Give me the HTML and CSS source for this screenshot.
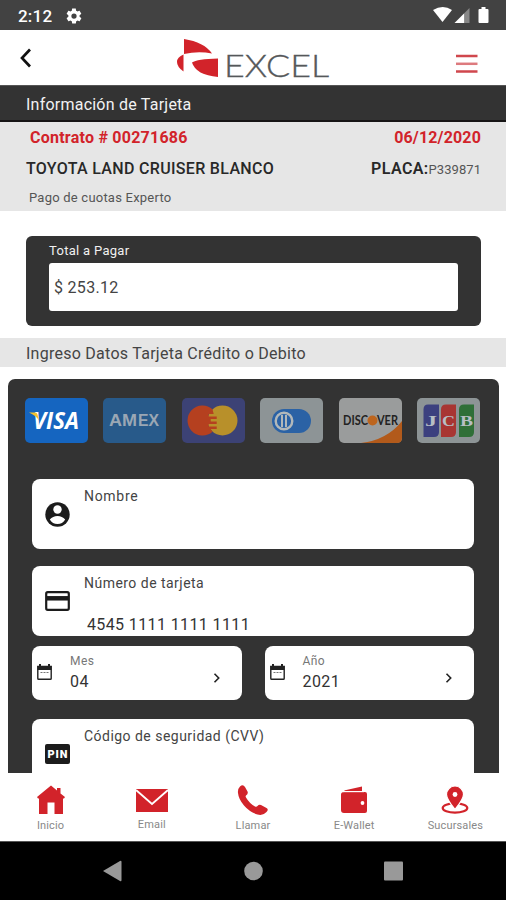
FILE: index.html
```html
<!DOCTYPE html>
<html lang="es">
<head>
<meta charset="utf-8">
<title>Información de Tarjeta</title>
<link rel="stylesheet" href="styles.css">
</head>
<body>
<div class="app">
  <div class="status">
    <span class="clock">2:12</span>
    <svg class="gear" width="18" height="18" viewBox="0 0 24 24"><path fill="#fff" fill-rule="evenodd" d="M19.4 13a7.500 7.500 0 0 0 0-2l2.100-1.600c.2-.2.2-.4.100-.6l-2-3.500c-.1-.2-.4-.3-.6-.2l-2.500 1a7.300 7.300 0 0 0-1.700-1L14.400 2.400c0-.2-.2-.4-.5-.4h-4c-.2 0-.4.2-.5.4L9.100 5.100c-.6.2-1.200.6-1.700 1l-2.500-1c-.2-.1-.5 0-.6.2l-2 3.500c-.1.200-.1.500.1.600L4.500 11a7.900 7.900 0 0 0 0 2l-2.100 1.600c-.2.200-.2.400-.1.600l2 3.500c.1.200.4.300.6.200l2.500-1c.5.400 1.100.7 1.700 1l.4 2.700c0 .200.2.400.5.400h4c.2 0 .4-.2.500-.4l.4-2.700c.6-.2 1.200-.6 1.700-1l2.500 1c.2.100.5 0 .6-.2l2-3.500c.1-.2.1-.5-.1-.6zM12 15.500a3.500 3.500 0 1 1 0-7 3.500 3.500 0 0 1 0 7z"/></svg>
    <svg class="signals" width="60" height="20" viewBox="0 0 60 20"><path fill="#fff" d="M-1 5Q9-1 18 5L8.500 17z"/><path fill="#fff" d="M20.500 18L30.500 8v10z"/><path fill="#888" d="M30.500 8l5-5v15h-5z"/><path fill="#fff" d="M47.500 2h4v2h2q1 0 1 1v12q0 1-1 1h-8q-1 0-1-1V5q0-1 1-1h2z"/></svg>
  </div>

  <header class="header">
    <svg class="back" width="14" height="20" viewBox="0 0 14 20"><path d="M11 1.500L3 10l8 8.500" fill="none" stroke="#111" stroke-width="2.700"/></svg>
    <svg class="brand" width="170" height="48" viewBox="0 0 170 48">
      <g fill="#d2232a"><path d="M8 2Q28 5 36 16.500Q22 14 8 17z"/><path d="M7.500 17.500v17Q1 30 1 25t6.500-7.500z"/><path d="M16 25.500q5-3.500 26-4v18.500Q20 38 16 25.500z"/></g>
      <text class="brand-name" x="48" y="40" textLength="105" lengthAdjust="spacingAndGlyphs">EXCEL</text>
    </svg>
    <svg class="menu" width="22" height="20" viewBox="0 0 22 20"><path d="M0 2h21.500M0 17.500h21.500" stroke="#d0474d" stroke-width="2.300"/><path d="M0 9.800h21.500" stroke="#dd7a7e" stroke-width="2.500"/></svg>
  </header>

  <h1 class="title">Información de Tarjeta</h1>

  <section class="contract">
    <div class="row red"><span class="number">Contrato # 00271686</span><span class="date">06/12/2020</span></div>
    <div class="row vehicle"><span class="model">TOYOTA LAND CRUISER BLANCO</span><span><b class="plate-label">PLACA:</b><span class="plate">P339871</span></span></div>
    <div class="concept">Pago de cuotas Experto</div>
  </section>

  <section class="total">
    <div class="total-label">Total a Pagar</div>
    <div class="amount">$ 253.12</div>
  </section>

  <h2 class="subtitle">Ingreso Datos Tarjeta Crédito o Debito</h2>

  <section class="form">
    <div class="brands">
      <svg viewBox="0 0 63 45"><rect width="63" height="45" rx="5" fill="#1565c0"/><text class="visa" x="8" y="31" textLength="46" lengthAdjust="spacingAndGlyphs">VISA</text><path d="M4 14.500h6q2 0 2.500 2l1.500 6q-3-5-10-8z" fill="#f5c12e"/></svg>
      <svg viewBox="0 0 63 45"><rect width="63" height="45" rx="5" fill="#285a8a"/><text class="amex" x="6" y="27.500" textLength="28" lengthAdjust="spacingAndGlyphs">AM</text><text class="amex" x="35" y="27.500" textLength="21" lengthAdjust="spacingAndGlyphs">EX</text></svg>
      <svg viewBox="0 0 63 45"><rect width="63" height="45" rx="5" fill="#3c4275"/><circle cx="40.500" cy="22.500" r="15" fill="#b8902a"/><path d="M30.500 11.300a15 15 0 1 0 0 22.400l-1.800-2.700h6v-2.500h-8V26h8v-2.500h-6V21h6v-2.500h-8V16h5z" fill="#b5401f"/></svg>
      <svg viewBox="0 0 63 45"><rect width="63" height="45" rx="5" fill="#8d9496"/><rect x="12" y="11" width="39" height="24" rx="12" fill="#2b62a5"/><circle cx="24" cy="23" r="8.300" fill="#2b62a5" stroke="#b2b8ba" stroke-width="2.400"/><path d="M22 17v12M26 17v12" stroke="#b2b8ba" stroke-width="2"/></svg>
      <svg viewBox="0 0 63 45"><rect width="63" height="45" rx="5" fill="#9a9c9c"/><path d="M22 45Q48 42 63 23v17q0 5-5 5z" fill="#b25a1b"/><text class="discover" x="4" y="27" textLength="25" lengthAdjust="spacingAndGlyphs">DISC</text><circle cx="33.500" cy="22.500" r="5" fill="#bd651e"/><text class="discover" x="38" y="27" textLength="21" lengthAdjust="spacingAndGlyphs">VER</text></svg>
      <svg viewBox="0 0 63 45"><rect width="63" height="45" rx="5" fill="#8d9496"/><path d="M11 6.500h11V34q0 5-5 5H6.500V11.500q0-5 4.500-5z" fill="#3c407f"/><path d="M29 6.500h10V34q0 5-5 5H24V11.500q0-5 5-5z" fill="#a83533"/><path d="M47 6.500h10V34q0 5-5 5H42V11.500q0-5 5-5z" fill="#2f6f38"/><text class="jcb" x="8" y="27.500" textLength="12" lengthAdjust="spacingAndGlyphs">J</text><text class="jcb" x="25" y="27.500" textLength="13" lengthAdjust="spacingAndGlyphs">C</text><text class="jcb" x="43" y="27.500" textLength="13" lengthAdjust="spacingAndGlyphs">B</text></svg>
    </div>

    <div class="field">
      <svg class="icon" width="25" height="25" viewBox="0 0 25 25"><circle cx="12.500" cy="12.500" r="12.200" fill="#1c1c1c"/><circle cx="12.500" cy="7.500" r="4.200" fill="#fff"/><path d="M4.800 17.500q3-3.500 7.700-3.500t7.700 3.500q-2.700 4.500-7.700 4.500t-7.700-4.500z" fill="#fff"/></svg>
      <div class="label name-label">Nombre</div>
    </div>

    <div class="field">
      <svg class="icon" width="25" height="20" viewBox="0 0 25 20"><rect x="1.200" y="1.200" width="22.600" height="17.600" rx="1.500" fill="none" stroke="#1c1c1c" stroke-width="2.200"/><path d="M1 7.300h23" stroke="#1c1c1c" stroke-width="4.500"/></svg>
      <div><div class="label">Número de tarjeta</div><div class="card-number">4545 1111 1111 1111</div></div>
    </div>

    <div class="expiry">
      <div class="select">
        <svg class="cal" width="15" height="16" viewBox="0 0 15 16"><path d="M.8 2.500h13.400v12q0 .8-.8.800H1.600q-.8 0-.8-.8z" fill="#fff" stroke="#222" stroke-width="1.400"/><path d="M.5 2h14v4H.5zM2 0h2v3H2zM11 0h2v3h-2z" fill="#222"/><path d="M3.500 8.500h8" stroke="#777" stroke-dasharray="2 1"/></svg>
        <div class="select-text"><div class="small">Mes</div><div class="value">04</div></div>
        <svg class="chevron" width="8" height="10" viewBox="0 0 8 10"><path d="M1.500.8L5.700 5 1.500 9.200" fill="none" stroke="#222" stroke-width="1.600"/></svg>
      </div>
      <div class="select">
        <svg class="cal" width="15" height="16" viewBox="0 0 15 16"><path d="M.8 2.500h13.400v12q0 .8-.8.800H1.600q-.8 0-.8-.8z" fill="#fff" stroke="#222" stroke-width="1.400"/><path d="M.5 2h14v4H.5zM2 0h2v3H2zM11 0h2v3h-2z" fill="#222"/><path d="M3.500 8.500h8" stroke="#777" stroke-dasharray="2 1"/></svg>
        <div class="select-text"><div class="small">Año</div><div class="value">2021</div></div>
        <svg class="chevron" width="8" height="10" viewBox="0 0 8 10"><path d="M1.500.8L5.700 5 1.500 9.200" fill="none" stroke="#222" stroke-width="1.600"/></svg>
      </div>
    </div>

    <div class="field">
      <svg class="icon" width="25" height="20" viewBox="0 0 25 20"><rect width="25" height="20" rx="2" fill="#1c1c1c"/><text class="pin" x="2.500" y="14" textLength="20">PIN</text></svg>
      <div class="label">Código de seguridad (CVV)</div>
    </div>
  </section>

  <nav class="tabs">
    <div class="tab"><svg width="34" height="30" viewBox="0 0 34 30"><path fill="#d2232a" d="M17 .5l6 5V3h3.500v5.500L31 12l-1 1.500h-1V29h-8.500V17.500h-7V29H5V13.500H4L3 12z"/></svg><span>Inicio</span></div>
    <div class="tab"><svg width="34" height="30" viewBox="0 0 34 30"><path fill="#d2232a" d="M1 4h32v23H1z"/><path d="M1 5l16 14L33 5" fill="none" stroke="#fff" stroke-width="1.800"/></svg><span class="raised">Email</span></div>
    <div class="tab"><svg width="34" height="30" viewBox="0 0 34 30"><path fill="#d2232a" d="M4 1.500q3-2.500 5 .5l2.500 4.500q1 2-1.500 4-.8.700 0 2 3.500 6 9 9 1.500.8 2.500-.5 1.500-2 3.500-1l5.500 3q2.500 1.500 0 4-3.500 4-9 2.500-8-2.500-13.500-9T2 8q-.5-4 2-6.500z"/></svg><span>Llamar</span></div>
    <div class="tab"><svg width="34" height="30" viewBox="0 0 34 30"><path fill="#d2232a" d="M7 5.500l18-4V6H8zM7 7h21q2 0 2 2v17q0 2-2 2H7q-3 0-3-3V9.500Q4 7 7 7z"/><path d="M6 6.700h21" stroke="#fff"/><circle cx="25.500" cy="18" r="1.900" fill="#fff"/></svg><span>E-Wallet</span></div>
    <div class="tab"><svg width="34" height="30" viewBox="0 0 34 30"><ellipse cx="17" cy="23" rx="12.300" ry="4.600" fill="none" stroke="#d2232a" stroke-width="2.200"/><path d="M17 24.500Q8.500 14 8.500 9.500a8.500 8.500 0 0 1 17 0Q25.500 14 17 24.500z" fill="#d2232a" stroke="#fff" stroke-width="1.200"/><circle cx="17" cy="9.500" r="2.400" fill="#fff"/></svg><span>Sucursales</span></div>
  </nav>

  <div class="navbar">
    <svg width="19" height="22" viewBox="0 0 19 22"><path d="M0 11L17 1q1.500-.8 1.500 1v18q0 1.800-1.500 1z" fill="#999"/></svg>
    <svg width="19" height="20" viewBox="0 0 19 20"><circle cx="9.500" cy="10" r="9.300" fill="#999"/></svg>
    <svg width="19" height="20" viewBox="0 0 19 20"><rect y=".5" width="19" height="19" rx="1" fill="#999"/></svg>
  </div>
</div>
</body>
</html>
```
FILE: styles.css
```css
* { box-sizing: border-box; }
body { margin: 0; background: #fff; font-family: Roboto, "Liberation Sans", sans-serif; color: #444; }
svg { display: block; flex: none; }
.app { width: 506px; height: 900px; overflow: hidden; display: flex; flex-direction: column; }
.app > * { flex: none; }

.status { height: 30px; background: #424242; display: flex; align-items: center; padding: 0 15px 0 18px; }
.clock { color: #fff; font-size: 17px; font-weight: 500; line-height: 20px; padding-top: 2px; width: 47px; letter-spacing: .2px; }
.gear { margin-top: 1px; }
.signals { margin-left: auto; margin-right: -3px; width: 60px; overflow: visible; }

.header { height: 55px; display: grid; grid-template-columns: 176px 170px 1fr; padding: 0 28px 0 0; }
.back { margin: 18px 0 0 19px; }
.brand { margin-top: 7px; }
.brand-name { font-family: Lato, sans-serif; font-weight: 300; font-size: 32px; fill: #55585a; stroke: #55585a; stroke-width: .35px; }
.menu { margin: 24px 0 0; justify-self: end; }

.title { height: 37px; margin: 0; padding: 0 26px; background: #333; border-top: 1px solid #555; border-bottom: 2px solid #171516; color: #f2f2f2; font-size: 16px; font-weight: 400; line-height: 37px; letter-spacing: .23px; }

.contract { height: 89px; background: #e6e6e6; padding: 6px 25px 0 26px; }
.row { display: flex; justify-content: space-between; line-height: 20px; height: 20px; font-size: 16px; }
.red { color: #d2232a; font-weight: 700; padding-left: 4px; }
.number { letter-spacing: .24px; }
.date { letter-spacing: .15px; }
.vehicle { margin-top: 10px; color: #282828; font-weight: 500; line-height: 21px; }
.model { letter-spacing: .32px; }
.plate-label { font-weight: 600; letter-spacing: .4px; }
.plate { font-weight: 400; font-size: 13px; color: #555; letter-spacing: .05px; }
.concept { font-size: 13px; line-height: 18px; padding: 11px 0 0 3px; color: #555; letter-spacing: .22px; }

.total { margin: 25px 25px 0 26px; height: 90px; background: #333; border-radius: 6px; padding: 6px 23px 0; }
.total-label { color: #f0f0f0; font-size: 13px; line-height: 17px; margin-bottom: 4px; letter-spacing: .3px; }
.amount { height: 48px; background: #fff; border-radius: 3px; font-size: 16px; line-height: 50px; padding-left: 5px; letter-spacing: .3px; }

.subtitle { margin: 12px 0 0; height: 29px; background: #e6e6e6; padding-left: 26px; font-size: 16px; font-weight: 400; line-height: 31px; letter-spacing: .26px; }

.form { margin: 12px 7px 0 8px; height: 394px; background: #333; border-radius: 7px 7px 0 0; padding: 19px 25px 0 24px; overflow: hidden; }
.brands { display: flex; justify-content: space-between; margin: 0 -6px 36px -7px; }
.brands svg { width: 63px; height: 45px; }
.visa { font: italic 700 23px "Open Sans", sans-serif; fill: #fff; }
.amex { font: 700 16px "Liberation Sans", sans-serif; fill: #9aa7b4; }
.discover { font: 700 13px Lato, sans-serif; fill: #222; }
.jcb { font: 700 14px "Liberation Serif", serif; fill: #b7bec4; }
.pin { font: 900 11px Roboto, sans-serif; fill: #fff; }

.field { height: 70px; background: #fff; border-radius: 8px; display: flex; gap: 14px; padding-left: 13px; margin-bottom: 17px; }
.field .icon { align-self: center; width: 25px; }
.label { font-size: 14px; line-height: 18px; padding-top: 8px; letter-spacing: .47px; }
.name-label { letter-spacing: .7px; }
.card-number { font-size: 16px; line-height: 20px; color: #333; margin: 23px 0 0 3px; letter-spacing: .38px; }
.expiry { display: flex; gap: 23px; margin: -7px 0 19px; }
.select { flex: 1; height: 54px; background: #fff; border-radius: 8px; display: flex; padding: 0 21px 0 5px; }
.cal { margin-top: 18px; }
.select-text { margin: 7px 0 0 18px; flex: 1; }
.small { font-size: 12px; line-height: 17px; color: #777; letter-spacing: .4px; }
.value { font-size: 16px; line-height: 23px; color: #333; letter-spacing: .4px; }
.chevron { margin-top: 27px; }

.tabs { height: 68px; display: grid; grid-template-columns: repeat(5, 1fr); background: #fff; }
.tab { display: flex; flex-direction: column; align-items: center; padding-top: 12px; font-size: 11px; line-height: 14px; color: #888; letter-spacing: .15px; }
.tab span { margin-top: 4px; }
.tab .raised { margin-top: 3px; }
.navbar { height: 59px; background: #000; border-top: 1px solid #555; display: flex; align-items: center; justify-content: space-between; padding: 0 103px; }
```
